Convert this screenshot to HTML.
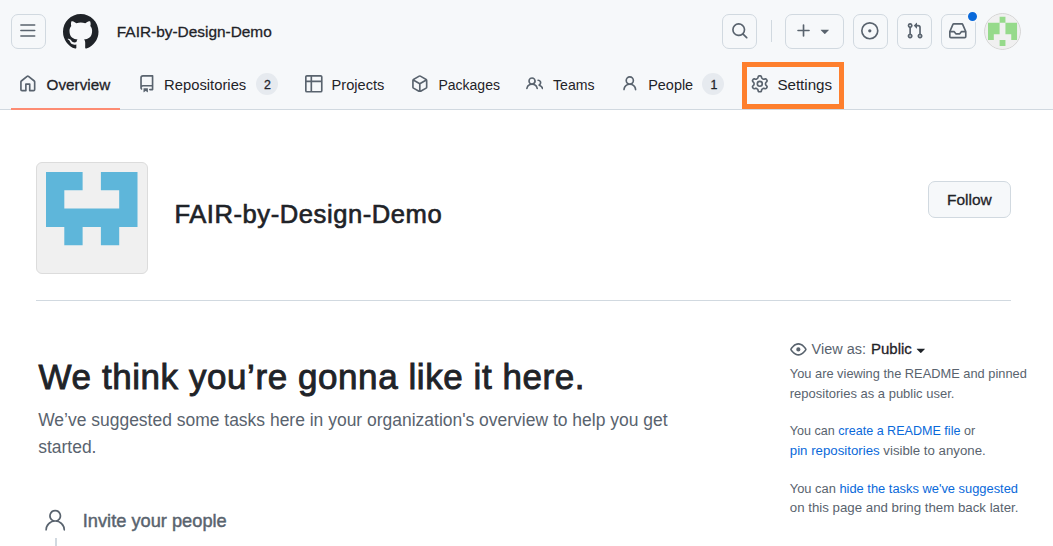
<!DOCTYPE html>
<html><head><meta charset="utf-8">
<style>
html,body{margin:0;padding:0;}
body{width:1053px;height:546px;overflow:hidden;background:#fff;position:relative;font-family:"Liberation Sans",sans-serif;color:#1f2328;}
.a{position:absolute;}
.t{position:absolute;white-space:nowrap;line-height:1;}
</style></head><body>
<div class="a" style="left:0px;top:0px;width:1053px;height:109px;background:#f6f8fa;border-bottom:1px solid #d1d9e0;"></div>
<div class="a" style="left:11px;top:14px;width:35px;height:35px;border:1px solid #d1d9e0;border-radius:7px;box-sizing:border-box;"></div>
<svg class="a" style="left:19.4px;top:22.2px" width="17.6" height="17.6" viewBox="0 0 16 16"><path fill="#59636e" d="M1 2.75A.75.75 0 0 1 1.75 2h12.5a.75.75 0 0 1 0 1.5H1.75A.75.75 0 0 1 1 2.75Zm0 5A.75.75 0 0 1 1.75 7h12.5a.75.75 0 0 1 0 1.5H1.75A.75.75 0 0 1 1 7.75ZM1.75 12h12.5a.75.75 0 0 1 0 1.5H1.75a.75.75 0 0 1 0-1.5Z"/></svg>
<svg class="a" style="left:63.3px;top:13.9px" width="35.5" height="35.5" viewBox="0 0 16 16"><path fill="#1f2328" d="M8 0c4.42 0 8 3.58 8 8a8.013 8.013 0 0 1-5.45 7.59c-.4.08-.55-.17-.55-.38 0-.27.01-1.13.01-2.2 0-.75-.25-1.23-.54-1.48 1.78-.2 3.65-.88 3.65-3.95 0-.88-.31-1.59-.82-2.15.08-.2.36-1.02-.08-2.12 0 0-.67-.22-2.2.82-.64-.18-1.32-.27-2-.27-.68 0-1.36.09-2 .27-1.53-1.03-2.2-.82-2.2-.82-.44 1.1-.16 1.92-.08 2.12-.51.56-.82 1.28-.82 2.15 0 3.06 1.86 3.75 3.64 3.95-.23.2-.44.55-.51 1.07-.46.21-1.61.55-2.33-.66-.15-.24-.6-.83-1.23-.82-.67.01-.27.38.01.53.34.19.73.9.82 1.13.16.45.68 1.31 2.69.94 0 .67.01 1.3.01 1.49 0 .21-.15.45-.55.38A7.995 7.995 0 0 1 0 8c0-4.42 3.58-8 8-8Z"/></svg>
<span class="t" style="left:116.8px;top:24px;font-size:15.42px;color:#1f2328;-webkit-text-stroke:0.3px #1f2328;">FAIR-by-Design-Demo</span>
<div class="a" style="left:722px;top:14px;width:35px;height:35px;border:1px solid #d1d9e0;border-radius:7px;box-sizing:border-box;"></div>
<svg class="a" style="left:730.9px;top:22.2px" width="17.6" height="17.6" viewBox="0 0 16 16"><path fill="#59636e" d="M10.68 11.74a6 6 0 0 1-7.922-8.982 6 6 0 0 1 8.982 7.922l3.04 3.04a.749.749 0 0 1-.326 1.275.749.749 0 0 1-.734-.215ZM11.5 7a4.499 4.499 0 1 0-8.997 0A4.499 4.499 0 0 0 11.5 7Z"/></svg>
<div class="a" style="left:770.5px;top:20px;width:1.3px;height:22px;background:#d1d9e0;"></div>
<div class="a" style="left:785px;top:14px;width:59px;height:35px;border:1px solid #d1d9e0;border-radius:7px;box-sizing:border-box;"></div>
<svg class="a" style="left:794.5px;top:22.2px" width="17.6" height="17.6" viewBox="0 0 16 16"><path fill="#59636e" d="M7.75 2a.75.75 0 0 1 .75.75V7h4.25a.75.75 0 0 1 0 1.5H8.5v4.25a.75.75 0 0 1-1.5 0V8.5H2.75a.75.75 0 0 1 0-1.5H7V2.75A.75.75 0 0 1 7.75 2Z"/></svg>
<svg class="a" style="left:816.3px;top:22.2px" width="17.6" height="17.6" viewBox="0 0 16 16"><path fill="#59636e" d="m4.427 7.427 3.396 3.396a.25.25 0 0 0 .354 0l3.396-3.396A.25.25 0 0 0 11.396 7H4.604a.25.25 0 0 0-.177.427Z"/></svg>
<div class="a" style="left:853px;top:14px;width:35px;height:35px;border:1px solid #d1d9e0;border-radius:7px;box-sizing:border-box;"></div>
<svg class="a" style="left:861.2px;top:22.2px" width="17.6" height="17.6" viewBox="0 0 16 16"><path fill="#59636e" d="M8 9.5a1.5 1.5 0 1 0 0-3 1.5 1.5 0 0 0 0 3ZM8 0a8 8 0 1 1 0 16A8 8 0 0 1 8 0ZM1.5 8a6.5 6.5 0 1 0 13 0 6.5 6.5 0 0 0-13 0Z"/></svg>
<div class="a" style="left:897px;top:14px;width:35px;height:35px;border:1px solid #d1d9e0;border-radius:7px;box-sizing:border-box;"></div>
<svg class="a" style="left:905.5px;top:22.2px" width="17.6" height="17.6" viewBox="0 0 16 16"><path fill="#59636e" d="M1.5 3.25a2.25 2.25 0 1 1 3 2.122v5.256a2.251 2.251 0 1 1-1.5 0V5.372A2.25 2.25 0 0 1 1.5 3.25Zm5.677-.177L9.573.677A.25.25 0 0 1 10 .854V2.5h1A2.5 2.5 0 0 1 13.5 5v5.628a2.251 2.251 0 1 1-1.5 0V5a1 1 0 0 0-1-1h-1v1.646a.25.25 0 0 1-.427.177L7.177 3.427a.25.25 0 0 1 0-.354ZM3.75 2.5a.75.75 0 1 0 0 1.5.75.75 0 0 0 0-1.5Zm0 9.5a.75.75 0 1 0 0 1.5.75.75 0 0 0 0-1.5Zm8.25.75a.75.75 0 1 0 1.5 0 .75.75 0 0 0-1.5 0Z"/></svg>
<div class="a" style="left:941px;top:14px;width:35px;height:35px;border:1px solid #d1d9e0;border-radius:7px;box-sizing:border-box;"></div>
<svg class="a" style="left:949.3px;top:22.2px" width="17.6" height="17.6" viewBox="0 0 16 16"><path fill="#59636e" d="M2.8 2.06A1.75 1.75 0 0 1 4.41 1h7.18c.7 0 1.333.417 1.61 1.06l2.74 6.395c.04.093.06.194.06.295v4.5A1.75 1.75 0 0 1 14.25 15H1.75A1.75 1.75 0 0 1 0 13.25v-4.5c0-.101.02-.202.06-.295Zm1.61.44a.25.25 0 0 0-.23.152L1.887 8H4.75a.75.75 0 0 1 .6.3L6.625 10h2.75l1.275-1.7a.75.75 0 0 1 .6-.3h2.863L11.82 2.652a.25.25 0 0 0-.23-.152Zm10.09 7h-2.875l-1.275 1.7a.75.75 0 0 1-.6.3h-3.5a.75.75 0 0 1-.6-.3L4.375 9.5H1.5v3.75c0 .138.112.25.25.25h12.5a.25.25 0 0 0 .25-.25Z"/></svg>
<div class="a" style="left:966px;top:10px;width:13px;height:13px;border-radius:50%;background:#0969da;border:2px solid #f6f8fa;box-sizing:border-box;"></div>
<div class="a" style="left:984px;top:13px;width:37px;height:37px;border-radius:50%;background:#f0f0f0;overflow:hidden;"><svg width="37" height="37" viewBox="0 0 37 37" style="position:absolute;left:0;top:0"><path fill="#96da8b" d="M15.62 3.85h5.82v5.82h-5.82ZM4.00 9.66h5.82v5.82h-5.82ZM9.81 9.66h5.82v5.82h-5.82ZM21.43 9.66h5.82v5.82h-5.82ZM27.24 9.66h5.82v5.82h-5.82ZM4.00 15.47h5.82v5.82h-5.82ZM9.81 15.47h5.82v5.82h-5.82ZM21.43 15.47h5.82v5.82h-5.82ZM27.24 15.47h5.82v5.82h-5.82ZM4.00 21.28h5.82v5.82h-5.82ZM27.24 21.28h5.82v5.82h-5.82ZM15.62 27.09h5.82v5.82h-5.82Z"/></svg><div style="position:absolute;left:0;top:0;width:37px;height:37px;border-radius:50%;border:1px solid #d4d4d4;box-sizing:border-box"></div></div>
<svg class="a" style="left:18.65px;top:74.7px" width="17.6" height="17.6" viewBox="0 0 16 16"><path fill="#59636e" d="M6.906.664a1.749 1.749 0 0 1 2.187 0l5.25 4.2c.415.332.657.835.657 1.367v7.019A1.75 1.75 0 0 1 13.25 15h-3.5a.75.75 0 0 1-.75-.75V9H7v5.25a.75.75 0 0 1-.75.75h-3.5A1.75 1.75 0 0 1 1 13.25V6.23c0-.531.242-1.034.657-1.366l5.25-4.2Zm1.25 1.171a.25.25 0 0 0-.312 0l-5.25 4.2a.25.25 0 0 0-.094.196v7.019c0 .138.112.25.25.25H5.5V8.25a.75.75 0 0 1 .75-.75h3.5a.75.75 0 0 1 .75.75v5.25h2.75a.25.25 0 0 0 .25-.25V6.23a.25.25 0 0 0-.094-.195Z"/></svg>
<span class="t" style="left:46.6px;top:77px;font-size:15.26px;color:#1f2328;-webkit-text-stroke:0.3px #1f2328;">Overview</span>
<div class="a" style="left:11px;top:108px;width:109px;height:2px;background:#fd8c73;"></div>
<svg class="a" style="left:138px;top:75px" width="17.6" height="17.6" viewBox="0 0 16 16"><path fill="#59636e" d="M2 2.5A2.5 2.5 0 0 1 4.5 0h8.75a.75.75 0 0 1 .75.75v12.5a.75.75 0 0 1-.75.75h-2.5a.75.75 0 0 1 0-1.5h1.75v-2h-8a1 1 0 0 0-.714 1.7.75.75 0 1 1-1.072 1.05A2.495 2.495 0 0 1 2 11.5Zm10.5-1h-8a1 1 0 0 0-1 1v6.708A2.486 2.486 0 0 1 4.5 9h8ZM5 12.25a.25.25 0 0 1 .25-.25h3.5a.25.25 0 0 1 .25.25v3.25a.25.25 0 0 1-.4.2l-1.45-1.087a.249.249 0 0 0-.3 0L5.4 15.7a.25.25 0 0 1-.4-.2Z"/></svg>
<span class="t" style="left:164.1px;top:78px;font-size:14.79px;color:#1f2328;">Repositories</span>
<div class="a" style="left:256px;top:73px;width:22px;height:22px;border-radius:11px;background:#e6eaef;"></div>
<span class="t" style="left:264.1px;top:79px;font-size:12.4px;color:#1f2328;-webkit-text-stroke:0.3px #1f2328;">2</span>
<svg class="a" style="left:305px;top:75.2px" width="17.6" height="17.6" viewBox="0 0 16 16"><path fill="#59636e" d="M0 1.75C0 .784.784 0 1.75 0h12.5C15.216 0 16 .784 16 1.75v12.5A1.75 1.75 0 0 1 14.25 16H1.75A1.75 1.75 0 0 1 0 14.25ZM6.5 6.5v8h7.75a.25.25 0 0 0 .25-.25V6.5Zm8-1.5V1.75a.25.25 0 0 0-.25-.25H6.5V5Zm-13 1.5v7.75c0 .138.112.25.25.25H5v-8ZM5 5V1.5H1.75a.25.25 0 0 0-.25.25V5Z"/></svg>
<span class="t" style="left:331.6px;top:78px;font-size:14.62px;color:#1f2328;">Projects</span>
<svg class="a" style="left:411.3px;top:74.9px" width="17.6" height="17.6" viewBox="0 0 16 16"><path fill="#59636e" d="m8.878.392 5.25 3.045c.54.314.872.89.872 1.514v6.098a1.75 1.75 0 0 1-.872 1.514l-5.25 3.045a1.75 1.75 0 0 1-1.756 0l-5.25-3.045A1.75 1.75 0 0 1 1 11.049V4.951c0-.624.332-1.201.872-1.514L7.122.392a1.75 1.75 0 0 1 1.756 0ZM7.875 1.69l-4.63 2.685L8 7.133l4.755-2.758-4.63-2.685a.248.248 0 0 0-.25 0ZM2.5 5.677v5.372c0 .09.047.171.125.216l4.625 2.683V8.432Zm6.25 8.271 4.625-2.683a.25.25 0 0 0 .125-.216V5.677L8.75 8.432Z"/></svg>
<span class="t" style="left:438.4px;top:78px;font-size:14.02px;color:#1f2328;">Packages</span>
<svg class="a" style="left:525.9px;top:74.5px" width="17.6" height="17.6" viewBox="0 0 16 16"><path fill="#59636e" d="M2 5.5a3.5 3.5 0 1 1 5.898 2.549 5.508 5.508 0 0 1 3.034 4.084.75.75 0 1 1-1.482.235 4 4 0 0 0-7.9 0 .75.75 0 0 1-1.482-.236A5.507 5.507 0 0 1 3.102 8.05 3.493 3.493 0 0 1 2 5.5ZM11 4a3.001 3.001 0 0 1 2.22 5.018 5.01 5.01 0 0 1 2.56 3.012.749.749 0 0 1-.885.954.752.752 0 0 1-.549-.514 3.507 3.507 0 0 0-2.522-2.372.75.75 0 0 1-.574-.73v-.352a.75.75 0 0 1 .416-.672A1.5 1.5 0 0 0 11 5.5.75.75 0 0 1 11 4Zm-5.5-.5a2 2 0 1 0-.001 3.999A2 2 0 0 0 5.5 3.5Z"/></svg>
<span class="t" style="left:553px;top:78px;font-size:14.1px;color:#1f2328;">Teams</span>
<svg class="a" style="left:621.4px;top:74.8px" width="17.6" height="17.6" viewBox="0 0 16 16"><path fill="#59636e" d="M10.561 8.073a6.005 6.005 0 0 1 3.432 5.142.75.75 0 1 1-1.498.07 4.5 4.5 0 0 0-8.99 0 .75.75 0 0 1-1.498-.07 6.004 6.004 0 0 1 3.431-5.142 3.999 3.999 0 1 1 5.123 0ZM10.5 5a2.5 2.5 0 1 0-5 0 2.5 2.5 0 0 0 5 0Z"/></svg>
<span class="t" style="left:648.2px;top:78px;font-size:14.45px;color:#1f2328;">People</span>
<div class="a" style="left:702px;top:73px;width:22px;height:22px;border-radius:11px;background:#e6eaef;"></div>
<span class="t" style="left:710.6px;top:79px;font-size:12.4px;color:#1f2328;-webkit-text-stroke:0.3px #1f2328;">1</span>
<svg class="a" style="left:751.1px;top:75.1px" width="17.6" height="17.6" viewBox="0 0 16 16"><path fill="#59636e" d="M8 0a8.2 8.2 0 0 1 .701.031C9.444.095 9.99.645 10.16 1.29l.288 1.107c.018.066.079.158.212.224.231.114.454.243.668.386.123.082.233.09.299.071l1.103-.303c.644-.176 1.392.021 1.82.63.27.385.506.792.704 1.218.315.675.111 1.422-.364 1.891l-.814.806c-.049.048-.098.147-.088.294.016.257.016.515 0 .772-.01.147.038.246.088.294l.814.806c.475.469.679 1.216.364 1.891a7.977 7.977 0 0 1-.704 1.217c-.428.61-1.176.807-1.82.63l-1.102-.302c-.067-.019-.177-.011-.3.071a5.909 5.909 0 0 1-.668.386c-.133.066-.194.158-.211.224l-.29 1.106c-.168.646-.715 1.196-1.458 1.26a8.006 8.006 0 0 1-1.402 0c-.743-.064-1.289-.614-1.458-1.26l-.289-1.106c-.018-.066-.079-.158-.212-.224a5.738 5.738 0 0 1-.668-.386c-.123-.082-.233-.09-.299-.071l-1.103.303c-.644.176-1.392-.021-1.82-.63a8.12 8.12 0 0 1-.704-1.218c-.315-.675-.111-1.422.363-1.891l.815-.806c.05-.048.098-.147.088-.294a6.214 6.214 0 0 1 0-.772c.01-.147-.038-.246-.088-.294l-.815-.806C.635 6.045.431 5.298.746 4.623a7.92 7.92 0 0 1 .704-1.217c.428-.61 1.176-.807 1.82-.63l1.102.302c.067.019.177.011.3-.071.214-.143.437-.272.668-.386.133-.066.194-.158.211-.224l.29-1.106C6.009.645 6.556.095 7.299.03 7.53.01 7.764 0 8 0Zm-.571 1.525c-.036.003-.108.036-.137.146l-.289 1.105c-.147.561-.549.967-.998 1.189-.173.086-.34.183-.5.29-.417.278-.97.423-1.529.27l-1.103-.303c-.109-.03-.175.016-.195.045-.22.312-.412.644-.573.99-.014.031-.021.11.059.19l.815.806c.411.406.562.957.53 1.456a4.709 4.709 0 0 0 0 .582c.032.499-.119 1.05-.53 1.456l-.815.806c-.081.08-.073.159-.059.19.162.346.353.677.573.989.02.03.085.076.195.046l1.102-.303c.56-.153 1.113-.008 1.53.27.161.107.328.204.501.29.447.222.85.629.997 1.189l.289 1.105c.029.109.101.143.137.146a6.6 6.6 0 0 0 1.142 0c.036-.003.108-.036.137-.146l.289-1.105c.147-.561.549-.967.998-1.189.173-.086.34-.183.5-.29.417-.278.97-.423 1.529-.27l1.103.303c.109.029.175-.016.195-.045.22-.313.411-.644.573-.99.014-.031.021-.11-.059-.19l-.815-.806c-.411-.406-.562-.957-.53-1.456a4.709 4.709 0 0 0 0-.582c-.032-.499.119-1.05.53-1.456l.815-.806c.081-.08.073-.159.059-.19a6.464 6.464 0 0 0-.573-.989c-.02-.03-.085-.076-.195-.046l-1.102.303c-.56.153-1.113.008-1.53-.27a4.44 4.44 0 0 0-.501-.29c-.447-.222-.85-.629-.997-1.189l-.289-1.105c-.029-.11-.101-.143-.137-.146a6.6 6.6 0 0 0-1.142 0ZM11 8a3 3 0 1 1-6 0 3 3 0 0 1 6 0ZM9.5 8a1.5 1.5 0 1 0-3.001.001A1.5 1.5 0 0 0 9.5 8Z"/></svg>
<span class="t" style="left:777.4px;top:77px;font-size:15.15px;color:#1f2328;">Settings</span>
<div class="a" style="left:742px;top:62px;width:102px;height:47px;border:5px solid #fe7f2d;box-sizing:border-box;"></div>
<div class="a" style="left:36px;top:162px;width:112px;height:112px;background:#f0f0f0;border:1px solid #dcdcdc;border-radius:6px;box-sizing:border-box;"></div>
<svg class="a" style="left:46px;top:172.2px" width="92" height="92" viewBox="0 0 92 92"><path fill="#5eb6da" d="M0.00 0.00h18.31v18.31h-18.31ZM18.30 0.00h18.31v18.31h-18.31ZM54.90 0.00h18.31v18.31h-18.31ZM73.20 0.00h18.31v18.31h-18.31ZM0.00 18.30h18.31v18.31h-18.31ZM73.20 18.30h18.31v18.31h-18.31ZM0.00 36.60h18.31v18.31h-18.31ZM18.30 36.60h18.31v18.31h-18.31ZM36.60 36.60h18.31v18.31h-18.31ZM54.90 36.60h18.31v18.31h-18.31ZM73.20 36.60h18.31v18.31h-18.31ZM18.30 54.90h18.31v18.31h-18.31ZM54.90 54.90h18.31v18.31h-18.31Z"/></svg>
<span class="t" style="left:174.4px;top:202px;font-size:25.6px;color:#1f2328;-webkit-text-stroke:0.65px #1f2328;letter-spacing:0.55px;">FAIR-by-Design-Demo</span>
<div class="a" style="left:928px;top:181px;width:83px;height:37px;background:#f6f8fa;border:1px solid #d1d9e0;border-radius:7px;box-sizing:border-box;"></div>
<span class="t" style="left:947px;top:192px;font-size:15.5px;color:#1f2328;-webkit-text-stroke:0.3px #1f2328;">Follow</span>
<div class="a" style="left:36px;top:300px;width:975px;height:1px;background:#d1d9e0;"></div>
<span class="t" style="left:38.6px;top:359px;font-size:35.0px;color:#1f2328;-webkit-text-stroke:0.9px #1f2328;letter-spacing:0.57px;">We think you’re gonna like it here.</span>
<span class="t" style="left:38.2px;top:412px;font-size:17.48px;color:#59636e;">We’ve suggested some tasks here in your organization's overview to help you get</span>
<span class="t" style="left:38.2px;top:439px;font-size:17.48px;color:#59636e;">started.</span>
<svg class="a" style="left:41.9px;top:507.0px" width="26.4" height="26.4" viewBox="0 0 24 24"><path fill="#59636e" d="M12 2.5a5.5 5.5 0 0 1 3.096 10.047 9.005 9.005 0 0 1 5.9 8.181.75.75 0 1 1-1.499.044 7.5 7.5 0 0 0-14.993 0 .75.75 0 0 1-1.5-.045 9.005 9.005 0 0 1 5.9-8.18A5.5 5.5 0 0 1 12 2.5ZM8 8a4 4 0 1 0 8 0 4 4 0 0 0-8 0Z"/></svg>
<span class="t" style="left:82.8px;top:512px;font-size:18.24px;color:#59636e;-webkit-text-stroke:0.45px #59636e;">Invite your people</span>
<div class="a" style="left:55px;top:538px;width:2px;height:8px;background:#d1d9e0;"></div>
<svg class="a" style="left:790.4px;top:340.6px" width="16.8" height="16.8" viewBox="0 0 16 16"><path fill="#59636e" d="M8 2c1.981 0 3.671.992 4.933 2.078 1.27 1.091 2.187 2.345 2.637 3.023a1.62 1.62 0 0 1 0 1.798c-.45.678-1.367 1.932-2.637 3.023C11.67 13.008 9.981 14 8 14c-1.981 0-3.671-.992-4.933-2.078C1.797 10.83.88 9.576.43 8.898a1.62 1.62 0 0 1 0-1.798c.45-.677 1.367-1.931 2.637-3.022C4.33 2.992 6.019 2 8 2ZM1.679 7.932a.12.12 0 0 0 0 .136c.411.622 1.241 1.75 2.366 2.717C5.176 11.758 6.527 12.5 8 12.5c1.473 0 2.825-.742 3.955-1.715 1.124-.967 1.954-2.096 2.366-2.717a.12.12 0 0 0 0-.136c-.412-.621-1.242-1.75-2.366-2.717C10.824 4.242 9.473 3.5 8 3.5c-1.473 0-2.825.742-3.955 1.715-1.124.967-1.954 2.096-2.366 2.717ZM8 10a2 2 0 1 1-.001-3.999A2 2 0 0 1 8 10Z"/></svg>
<span class="t" style="left:811.6px;top:342px;font-size:14.45px;color:#59636e;">View as:</span>
<span class="t" style="left:871px;top:341px;font-size:14.98px;color:#1f2328;-webkit-text-stroke:0.3px #1f2328;">Public</span>
<svg class="a" style="left:912.3px;top:341.3px" width="17.6" height="17.6" viewBox="0 0 16 16"><path fill="#1f2328" d="m4.427 7.427 3.396 3.396a.25.25 0 0 0 .354 0l3.396-3.396A.25.25 0 0 0 11.396 7H4.604a.25.25 0 0 0-.177.427Z"/></svg>
<span class="t" style="left:789.8px;top:368px;font-size:12.84px;color:#59636e;">You are viewing the README and pinned</span>
<span class="t" style="left:789.8px;top:387px;font-size:12.99px;color:#59636e;">repositories as a public user.</span>
<span class="t" style="left:789.8px;top:425px;font-size:12.57px;color:#59636e;">You can <span style="color:#0969da">create a README file</span> or</span>
<span class="t" style="left:789.8px;top:444px;font-size:13.25px;color:#59636e;"><span style="color:#0969da">pin repositories</span> visible to anyone.</span>
<span class="t" style="left:789.8px;top:483px;font-size:12.88px;color:#59636e;">You can <span style="color:#0969da">hide the tasks we've suggested</span></span>
<span class="t" style="left:789.8px;top:501px;font-size:13.28px;color:#59636e;">on this page and bring them back later.</span>
</body></html>
